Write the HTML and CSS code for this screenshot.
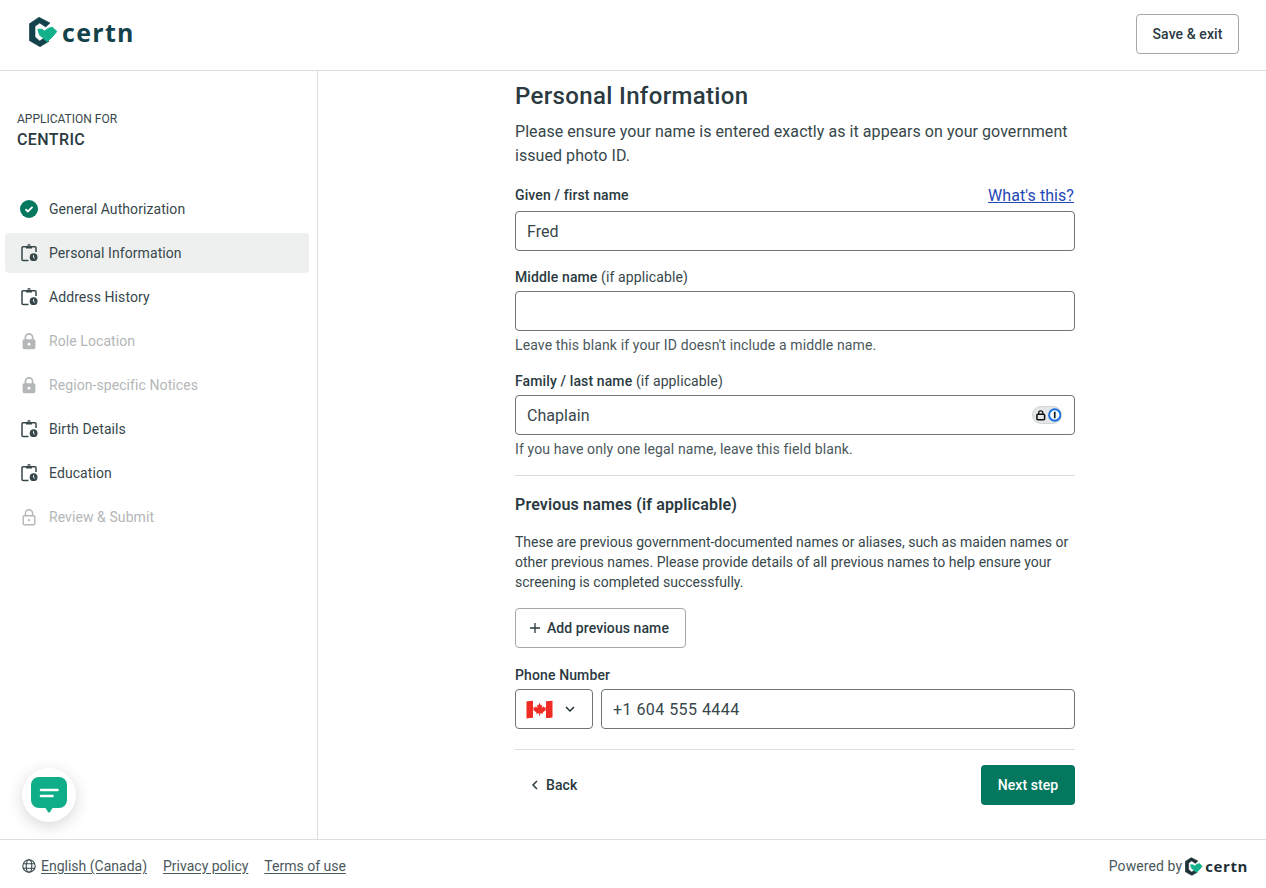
FILE: index.html
```html
<!DOCTYPE html>
<html lang="en">
<head>
<meta charset="utf-8">
<title>Certn application</title>
<link rel="stylesheet" href="styles.css">
</head>
<body>
<svg class="defs" width="0" height="0" aria-hidden="true">
  <symbol id="clip" viewBox="0 0 18 18">
    <path d="M6 2.800H3a1 1 0 0 0-1 1v11.800a1 1 0 0 0 1 1H8.500" fill="none" stroke="currentColor" stroke-width="1.500"/>
    <path d="M12 2.800h3a1 1 0 0 1 1 1V8" fill="none" stroke="currentColor" stroke-width="1.500"/>
    <path d="M6 4.500V2h1.700a1.400 1.400 0 1 1 2.600 0H12v2.500z" fill="currentColor"/>
    <circle cx="9" cy="1.500" r=".5" fill="#fff"/>
    <circle cx="13.600" cy="13.200" r="3.900" fill="currentColor"/>
    <path d="M13.500 11.200v2.200l1.400 1" fill="none" stroke="#fff" stroke-width=".9"/>
  </symbol>
  <symbol id="lock" viewBox="0 0 18 18">
    <path d="M5.400 8V5.400a3.600 3.600 0 0 1 7.200 0V8" fill="none" stroke="currentColor" stroke-width="1.700"/>
    <rect x="2.600" y="7.200" width="12.800" height="10" rx="1.600" fill="currentColor"/>
    <circle cx="9" cy="12.200" r="1.400" fill="#fff"/>
  </symbol>
  <symbol id="mark" viewBox="0 0 29 30">
    <path d="M10 .3 .3 6.800v16.800L11 29.700l9-5.400-5-3.300-4.300 3L6 20V9.300l4.700-3.300 6 4 4.300-4z" fill="currentColor" stroke="currentColor" stroke-width=".6" stroke-linejoin="round"/>
    <path class="heart" d="M8.800 12.300Q13 11.300 15.700 14 19 10.700 23.300 10.200l4.500 4.200Q23.500 20.500 18.300 24.600 16 23.500 14 20.500L10.700 18.300z" stroke-width="1" stroke-linejoin="round"/>
  </symbol>
</svg>

<header class="topbar">
  <a class="brand" href="#">
    <svg class="brand-mark"><use href="#mark"/></svg>
    <span class="brand-word">certn</span>
  </a>
  <button class="btn btn-outline save">Save &amp; exit</button>
</header>

<div class="body-row">
  <aside class="sidebar">
    <div class="app-for">
      <div class="app-label">APPLICATION FOR</div>
      <div class="app-name">CENTRIC</div>
    </div>
    <nav class="steps">
      <a class="step">
        <svg class="step-icon done" viewBox="0 0 18 18"><circle cx="9" cy="9" r="9" fill="currentColor"/><path d="M5.500 9.200l2.400 2.300 4.600-4.600" fill="none" stroke="#fff" stroke-width="1.900"/></svg>
        General Authorization
      </a>
      <a class="step active"><svg class="step-icon"><use href="#clip"/></svg>Personal Information</a>
      <a class="step"><svg class="step-icon"><use href="#clip"/></svg>Address History</a>
      <a class="step locked"><svg class="step-icon"><use href="#lock"/></svg>Role Location</a>
      <a class="step locked"><svg class="step-icon"><use href="#lock"/></svg>Region-specific Notices</a>
      <a class="step"><svg class="step-icon"><use href="#clip"/></svg>Birth Details</a>
      <a class="step"><svg class="step-icon"><use href="#clip"/></svg>Education</a>
      <a class="step locked">
        <svg class="step-icon" viewBox="0 0 18 18"><path d="M5.400 8V5.400a3.600 3.600 0 0 1 7.200 0V8" fill="none" stroke="currentColor" stroke-width="1.400"/><rect x="3.200" y="7.700" width="11.600" height="9" rx="1.200" fill="none" stroke="currentColor" stroke-width="1.400"/><circle cx="9" cy="12.200" r="1.100" fill="currentColor"/></svg>
        Review &amp; Submit
      </a>
    </nav>
  </aside>

  <main class="main">
    <div class="form">
      <h1 class="title">Personal Information</h1>
      <p class="lead">Please ensure your name is entered exactly as it appears on your government issued photo ID.</p>

      <div class="field first">
        <div class="label-row">
          <label class="label">Given / first name</label>
          <a class="whats" href="#">What's this?</a>
        </div>
        <div class="input">Fred</div>
      </div>

      <div class="field">
        <label class="label">Middle name <span class="opt">(if applicable)</span></label>
        <div class="input"></div>
        <div class="help">Leave this blank if your ID doesn't include a middle name.</div>
      </div>

      <div class="field">
        <label class="label">Family / last name <span class="opt">(if applicable)</span></label>
        <div class="input">Chaplain
          <span class="onepass">
            <svg class="op-lock" viewBox="0 0 12 12"><path d="M3.800 5.500V3.800a2.200 2.200 0 0 1 4.400 0v1.700" fill="none" stroke="#111" stroke-width="1.300"/><rect x="2" y="5.300" width="8" height="5.700" rx="1" fill="none" stroke="#111" stroke-width="1.600"/></svg>
            <svg class="op-one" viewBox="0 0 14 14"><circle cx="7" cy="7" r="5.900" fill="#fff" stroke="#1a6fe0" stroke-width="2"/><rect x="6.100" y="3.600" width="1.800" height="6.800" fill="#123"/></svg>
          </span>
        </div>
        <div class="help">If you have only one legal name, leave this field blank.</div>
      </div>

      <hr class="rule">

      <h2 class="subhead">Previous names (if applicable)</h2>
      <p class="body-text">These are previous government-documented names or aliases, such as maiden names or other previous names. Please provide details of all previous names to help ensure your screening is completed successfully.</p>

      <button class="btn btn-outline add">
        <svg class="plus" viewBox="0 0 12 12"><path d="M6 1v10M1 6h10" fill="none" stroke="currentColor" stroke-width="1.300"/></svg>
        Add previous name
      </button>

      <div class="field phone">
        <label class="label">Phone Number</label>
        <div class="phone-row">
          <div class="input flag-select">
            <svg class="flag" viewBox="0 0 27 19">
              <path d="M.5 1.500Q7 .2 13.500 1T26.500 .8V17.500q-6.500 1-13 .3T.5 18.500z" fill="#fff"/>
              <path d="M.5 1.500Q3.500 .8 7 .7V17.700q-3.500 .1-6.500 .8zM20 1.200q3.400 0 6.500-.4V17.500q-3.100 .5-6.500 .6z" fill="#ee2b24"/>
              <path d="M13.500 2.800l1.400 2.600 1.300-.6-.5 3.200 1.800-1.700.4 1.200 2.100-.3-.7 2.100.9.500-3.500 2.700.4 1.200-3-.4v2.500h-1v-2.500l-3 .4.400-1.200-3.500-2.700.9-.5-.7-2.100 2.100.3.400-1.200 1.800 1.700-.5-3.200 1.300.6z" fill="#ee2b24"/>
            </svg>
            <svg class="chev" viewBox="0 0 12 12"><path d="M2 4l4 4 4-4" fill="none" stroke="currentColor" stroke-width="1.500"/></svg>
          </div>
          <div class="input phone-input">+1 604 555 4444</div>
        </div>
      </div>

      <hr class="rule rule-actions">

      <div class="actions">
        <button class="btn back">
          <svg class="chev-left" viewBox="0 0 12 12"><path d="M8 2L4 6l4 4" fill="none" stroke="currentColor" stroke-width="1.500"/></svg>
          Back
        </button>
        <button class="btn next">Next step</button>
      </div>
    </div>
  </main>
</div>

<footer class="footer">
  <div class="foot-links">
    <svg class="globe" viewBox="0 0 14 14"><g fill="none" stroke="currentColor" stroke-width="1.100"><circle cx="7" cy="7" r="6.200"/><ellipse cx="7" cy="7" rx="2.800" ry="6.200"/><path d="M1.200 4.800h11.600M1.200 9.200h11.600"/></g></svg>
    <a class="foot-link lang" href="#">English (Canada)</a>
    <a class="foot-link" href="#">Privacy policy</a>
    <a class="foot-link" href="#">Terms of use</a>
  </div>
  <div class="powered">
    Powered by
    <svg class="powered-mark" viewBox="0 0 29 30"><use href="#mark" width="29" height="30"/></svg>
    <span class="powered-word">certn</span>
  </div>
</footer>

<button class="chat" aria-label="Chat">
  <svg viewBox="0 0 36 36" class="chat-icon">
    <path d="M8 0h20a8 8 0 0 1 8 8v15a8 8 0 0 1-8 8h-6.500L19 35a1.300 1.300 0 0 1-2 0l-2.500-4H8a8 8 0 0 1-8-8V8a8 8 0 0 1 8-8z" fill="#0fae88"/>
    <path d="M10 13h16.500M10 19h11.500" stroke="#fff" stroke-width="2.600" stroke-linecap="round"/>
  </svg>
</button>
</body>
</html>
```

FILE: styles.css
```css
* { box-sizing: border-box; }
html, body { margin: 0; height: 100%; }
body {
  font-family: Roboto, "Liberation Sans", sans-serif;
  color: #1f3136;
  background: #fff;
  display: flex;
  flex-direction: column;
  height: 888px;
  overflow: hidden;
  position: relative;
}
.defs { position: absolute; }

.topbar {
  height: 71px;
  flex: none;
  border-bottom: 1px solid #dcdedd;
  display: flex;
  align-items: center;
  justify-content: space-between;
  padding: 0 27px 2px 29px;
}
.brand { display: flex; align-items: center; gap: 4px; text-decoration: none; margin-top: -4px; }
.brand-mark { width: 29px; height: 30px; color: #14424b; }
.heart { fill: #14b08c; stroke: #14b08c; }
.brand-word {
  font-family: "Open Sans", sans-serif;
  font-weight: 700;
  font-size: 25px;
  line-height: 30px;
  letter-spacing: 1.3px;
  color: #14424b;
}
.btn {
  font-family: inherit;
  font-size: 14px;
  font-weight: 500;
  height: 40px;
  border-radius: 4px;
  background: #fff;
  color: #2a3a3f;
  border: 1px solid transparent;
  padding: 0 15px;
  display: inline-flex;
  align-items: center;
  letter-spacing: .08px;
}
.btn-outline { border-color: #a4a8a8; }
.save { width: 103px; justify-content: center; padding: 0; }

.body-row { flex: 1; display: flex; min-height: 0; }
.sidebar { width: 318px; flex: none; border-right: 1px solid #dcdedd; }
.app-for { padding: 38px 0 0 17px; }
.app-label { font-size: 12px; line-height: 20px; color: #37474b; }
.app-name { font-size: 16px; line-height: 22px; font-weight: 500; letter-spacing: .4px; color: #2a3a3f; }
.steps { margin-top: 38px; padding: 0 8px 0 5px; display: flex; flex-direction: column; gap: 4px; }
.step {
  height: 40px;
  border-radius: 4px;
  display: flex;
  align-items: center;
  gap: 11px;
  padding-left: 15px;
  font-size: 14px;
  letter-spacing: .08px;
  color: #37474b;
}
.step.active { background: #eef0ef; }
.step.locked { color: #b3b7b8; }
.step-icon { width: 18px; height: 18px; flex: none; }
.done { color: #04775f; }

.main { flex: 1; padding-left: 197px; }
.form { width: 560px; }
.title { margin: 10px 0 0; font-size: 24px; line-height: 30px; font-weight: 500; letter-spacing: .35px; color: #2a3a3f; }
.lead { margin: 9px 0 0; font-size: 16px; line-height: 24px; letter-spacing: .06px; color: #37474b; }
.field { margin-top: 16px; }
.field.first { margin-top: 17px; }
.label-row { display: flex; justify-content: space-between; align-items: center; height: 24px; margin-bottom: 3px; margin-top: -1px; }
.label-row .label { margin-bottom: 2px; }
.label { display: block; font-size: 14px; line-height: 20px; font-weight: 500; letter-spacing: .12px; color: #2a3a3f; }
.field > .label { margin-bottom: 4px; }
.opt { font-weight: 400; color: #37474b; }
.whats { font-size: 16px; line-height: 24px; color: #2347b5; letter-spacing: .07px; margin-right: 1px; }
.input {
  height: 40px;
  border: 1px solid #6d7577;
  border-radius: 4px;
  padding: 0 11px;
  font-size: 16px;
  letter-spacing: .05px;
  color: #37474b;
  display: flex;
  align-items: center;
  position: relative;
}
.help { margin-top: 4px; font-size: 14px; line-height: 20px; letter-spacing: .12px; color: #4a585c; }
.onepass {
  position: absolute;
  right: 12px;
  top: 10px;
  width: 30px;
  height: 18px;
  border-radius: 9px;
  background: #e4e6e7;
  border: 1px solid #d2d5d6;
  display: flex;
  align-items: center;
  padding-left: 2px;
  gap: 1px;
}
.op-lock { width: 12px; height: 12px; }
.op-one { width: 14px; height: 14px; }
.rule { border: 0; border-top: 1px solid #dcdedd; margin: 16px 0 0; }
.subhead { margin: 17px 0 0; font-size: 16px; line-height: 24px; font-weight: 600; letter-spacing: .15px; color: #2a3a3f; }
.body-text { margin: 15px 0 0; font-size: 14px; line-height: 20px; letter-spacing: 0; color: #37474b; }
.add { margin-top: 16px; width: 171px; padding: 0 0 0 13px; gap: 6px; }
.plus { width: 12px; height: 12px; }
.phone { margin-top: 17px; }
.phone-row { display: flex; gap: 8px; }
.flag-select { width: 78px; flex: none; padding-left: 10px; gap: 11px; }
.flag { width: 27px; height: 19px; }
.chev { width: 12px; height: 12px; color: #1f3136; }
.phone-input { flex: 1; letter-spacing: .45px; }
.rule-actions { margin-top: 20px; }
.actions { margin-top: 15px; display: flex; justify-content: space-between; }
.back { gap: 5px; padding-left: 13px; }
.chev-left { width: 12px; height: 12px; }
.next { background: #04775f; color: #fff; width: 94px; justify-content: center; padding: 0; }

.footer {
  height: 49px;
  flex: none;
  border-top: 1px solid #dcdedd;
  display: flex;
  align-items: center;
  justify-content: space-between;
  padding: 4px 18px 0 22px;
  font-size: 14px;
  color: #4a585c;
}
.foot-links { display: flex; align-items: center; gap: 16px; }
.globe { width: 14px; height: 14px; color: #37474b; margin-right: -11px; }
.foot-link { color: #4a585c; letter-spacing: 0; text-decoration: underline; text-underline-offset: 2px; }
.powered { display: flex; align-items: center; letter-spacing: .1px; }
.powered-mark { width: 18px; height: 19px; margin-left: 3px; color: #1f3136; }
.powered .heart { fill: #fff; stroke: #fff; }
.powered-word { font-family: "Open Sans", sans-serif; font-weight: 700; font-size: 15px; letter-spacing: .6px; color: #1f3136; margin-left: 2px; }

.chat {
  position: absolute;
  left: 22px;
  top: 768px;
  width: 54px;
  height: 54px;
  border-radius: 50%;
  background: #fff;
  border: 0;
  padding: 0;
  box-shadow: 0 4px 16px rgba(0,0,0,.16);
  display: flex;
  align-items: center;
  justify-content: center;
}
.chat-icon { width: 36px; height: 36px; }
```
